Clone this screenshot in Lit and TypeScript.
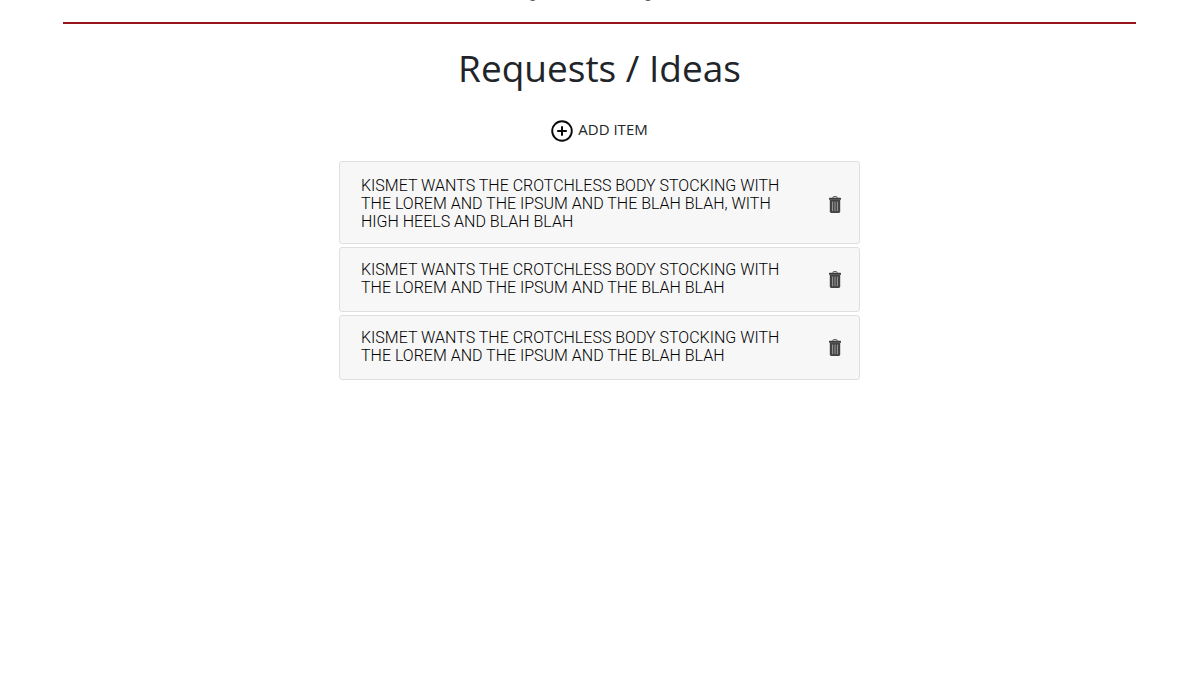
import { LitElement, html, css, svg } from "lit";
import { customElement, state } from "lit/decorators.js";

const trashIcon = svg`<svg class="trash" viewBox="0 0 12 18" width="12" height="18" aria-hidden="true">
  <path d="M4 2.200V1.200Q4 .6 4.600 .6H7.400Q8 .6 8 1.200V2.200" fill="none" stroke="#555" stroke-width="1"/>
  <rect x="0" y="1.800" width="12" height="2" rx=".6" fill="#3c3c3c"/>
  <path d="M.8 3.600H11.200V15.600Q11.200 17 9.800 17H2.200Q.8 17 .8 15.600Z" fill="#444"/>
  <path d="M3.600 5.600V15.200M6 5.600V15.200M8.400 5.600V15.200" stroke="#b4b4b4" stroke-width=".8"/>
</svg>`;

const plusIcon = svg`<svg class="plus" viewBox="0 0 22 22" width="22" height="22" aria-hidden="true">
  <circle cx="11" cy="11" r="9.800" fill="none" stroke="#0a0a0a" stroke-width="1.900"/>
  <path d="M11 6.200V15.800M6.200 11H15.800" stroke="#0a0a0a" stroke-width="2"/>
</svg>`;

@customElement("app-root")
export class AppRoot extends LitElement {
  static styles = css`
    :host {
      display: block;
      background: #fff;
      color: #212529;
      font-family: Roboto, "Liberation Sans", sans-serif;
    }
    .page {
      padding: 0 64px 0 63px;
    }
    .masthead {
      height: 22px;
      display: flex;
      justify-content: center;
      border-bottom: 2px solid #96141c;
    }
    .content {
      display: flex;
      flex-direction: column;
      align-items: center;
    }
    .title {
      margin: 20px 0 0;
      font: 400 37px/48px "Open Sans", "Noto Sans", sans-serif;
    }
    .add {
      display: flex;
      align-items: center;
      gap: 5px;
      margin: 24px 0 0;
      padding: 0;
      border: 0;
      background: none;
      color: #212529;
      font: 400 15px/24px "Open Sans", "Noto Sans", sans-serif;
      cursor: pointer;
    }
    .plus {
      margin-top: 4px;
    }
    .list {
      list-style: none;
      margin: 19px 0 0;
      padding: 0;
      width: 100%;
      max-width: 521px;
      display: grid;
      gap: 3px;
    }
    .card {
      box-sizing: border-box;
      display: flex;
      align-items: center;
      justify-content: space-between;
      padding: 13px 18px 14px 21px;
      background: #f7f7f7;
      border: 1px solid #dfdfdf;
      border-radius: 3px;
    }
    .card:first-child {
      padding-top: 15px;
      padding-bottom: 12px;
    }
    .text {
      margin: 0;
      max-width: 426px;
      color: #000;
      font-size: 16px;
      font-weight: 300;
      line-height: 18px;
    }
    .remove {
      display: flex;
      padding: 2px 0 0;
      border: 0;
      background: none;
      cursor: pointer;
    }
  `;

  @state() private items = [
    "KISMET WANTS THE CROTCHLESS BODY STOCKING WITH THE LOREM AND THE IPSUM AND THE BLAH BLAH, WITH HIGH HEELS AND BLAH BLAH",
    "KISMET WANTS THE CROTCHLESS BODY STOCKING WITH THE LOREM AND THE IPSUM AND THE BLAH BLAH",
    "KISMET WANTS THE CROTCHLESS BODY STOCKING WITH THE LOREM AND THE IPSUM AND THE BLAH BLAH",
  ];

  render() {
    return html`<div class="page">
      <header class="masthead">
        <svg width="146" height="3" viewBox="0 0 146 3" aria-hidden="true">
          <path d="M2 -2Q5.500 2.400 9.500 -2M117 -2Q121 2.400 125 -2" fill="none" stroke="#555" stroke-width="1.600"/>
        </svg>
      </header>
      <main class="content">
        <h1 class="title">Requests / Ideas</h1>
        <button class="add" type="button">${plusIcon}<span>ADD ITEM</span></button>
        <ul class="list">
          ${this.items.map(
            (item) => html`<li class="card">
              <p class="text">${item}</p>
              <button class="remove" type="button" aria-label="Delete item">${trashIcon}</button>
            </li>`
          )}
        </ul>
      </main>
    </div>`;
  }
}
